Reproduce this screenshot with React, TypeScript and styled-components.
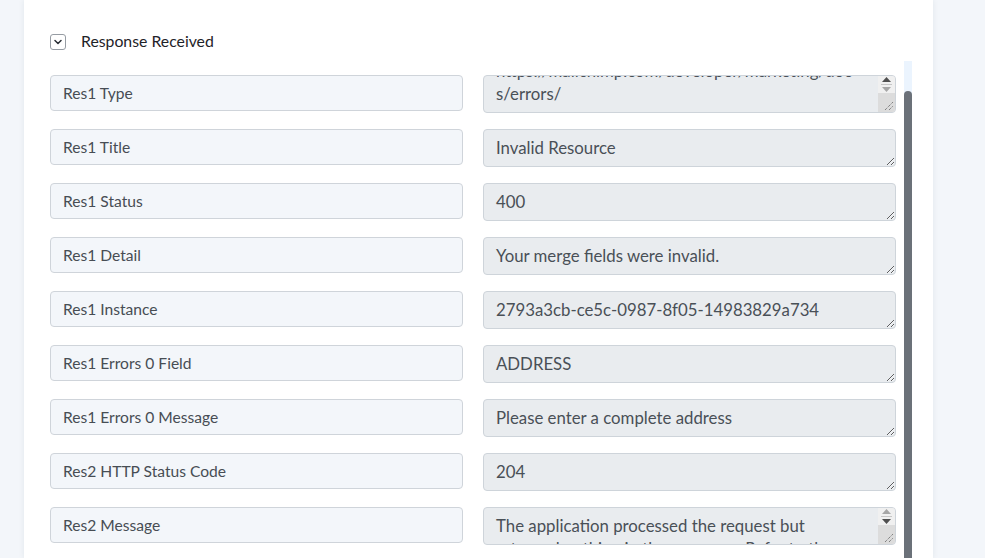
import styled, { createGlobalStyle } from "styled-components";
import { useEffect, useRef } from "react";
import * as React from "react";

const GlobalStyle = createGlobalStyle`
    * {
        box-sizing: border-box;
    }

    body {
        margin: 0;
        background: #f3f6fa;
        font-family: Lato, "Open Sans", sans-serif;
        overflow: hidden;
    }
`;

const Page = styled.div`
    height: 558px;
    overflow: hidden;
    padding-left: 24px;
`;

const Card = styled.section`
    width: 909px;
    height: 558px;
    background: #ffffff;
    box-shadow: 0 0 6px rgba(30, 45, 70, 0.08);
    padding: 34px 21px 0 26px;
    display: flex;
    flex-direction: column;
`;

const SectionHeader = styled.div`
    display: flex;
    align-items: center;
    gap: 15px;
    height: 16px;
    margin-bottom: 11px;
`;

const ToggleBox = styled.button`
    width: 16px;
    height: 16px;
    padding: 0;
    border: 1px solid #969ca3;
    border-radius: 3px;
    background: #ffffff;
    display: flex;
    align-items: center;
    justify-content: center;
    cursor: pointer;
`;

const SectionTitle = styled.span`
    font-size: 15.8px;
    line-height: 16px;
    color: #1f2328;
    margin-top: -2px;
`;

const Body = styled.div`
    flex: 1;
    display: flex;
    gap: 8px;
    overflow: hidden;
`;

const FieldList = styled.div`
    width: 846px;
    padding-top: 14px;
    display: flex;
    flex-direction: column;
    gap: 16px;
`;

const Row = styled.div`
    display: grid;
    grid-template-columns: 413px 413px;
    column-gap: 20px;
    align-items: start;
`;

const KeyField = styled.div`
    height: 36px;
    padding: 0 12px;
    display: flex;
    align-items: center;
    background: #f3f6fa;
    border: 1px solid #cfd4da;
    border-radius: 4px;
    font-size: 15.6px;
    color: #474d54;
`;

const ValueFrame = styled.div`
    display: flex;
    width: 413px;
    height: 38px;
    background: #e9ecef;
    border: 1px solid #ced4da;
    border-radius: 4px;
    overflow: hidden;
`;

const ValueArea = styled.textarea<{ $railed?: boolean }>`
    flex: 1;
    min-width: 0;
    height: 36px;
    margin: 0;
    padding: ${({ $railed }) => ($railed ? "6px 20px 7px 12px" : "6px 12px 7px")};
    background: transparent;
    border: none;
    font-family: Lato, "Open Sans", sans-serif;
    font-size: 16.8px;
    line-height: 23px;
    color: #495057;
    resize: ${({ $railed }) => ($railed ? "none" : "vertical")};
    overflow: hidden;
    outline: none;
`;

/* the little scroll column that long values show on their right */
const Rail = styled.div`
    width: 17px;
    flex-shrink: 0;
    display: flex;
    flex-direction: column;
`;

const RailButtons = styled.div`
    height: 17px;
    background: #f0f0f0;
    display: flex;
    flex-direction: column;
    align-items: center;
    justify-content: center;
    gap: 1px;
`;

const RailDivider = styled.div`
    width: 11px;
    height: 1px;
    background: #c6c6c6;
    margin: 1px 0;
`;

const RailCorner = styled.div`
    flex: 1;
    background: #dcdcdc;
    display: flex;
    align-items: flex-end;
    justify-content: flex-end;
    padding: 0 2px 2px 0;
`;

const ScrollTrack = styled.div`
    width: 8px;
    flex-shrink: 0;
    background: #ebf4fe;
    display: flex;
    flex-direction: column;
`;

const ScrollThumb = styled.div`
    flex: 1;
    margin-top: 30px;
    background: #6b7179;
    border-radius: 4px 4px 0 0;
`;

type Field = { key: string; value: string; railed?: boolean; scrollEnd?: boolean };

const fields: Field[] = [
    { key: "Res1 Type", value: "https://mailchimp.com/developer/marketing/docs/errors/", railed: true, scrollEnd: true },
    { key: "Res1 Title", value: "Invalid Resource" },
    { key: "Res1 Status", value: "400" },
    { key: "Res1 Detail", value: "Your merge fields were invalid." },
    { key: "Res1 Instance", value: "2793a3cb-ce5c-0987-8f05-14983829a734" },
    { key: "Res1 Errors 0 Field", value: "ADDRESS" },
    { key: "Res1 Errors 0 Message", value: "Please enter a complete address" },
    { key: "Res2 HTTP Status Code", value: "204" },
    {
        key: "Res2 Message",
        value: "The application processed the request but returned nothing in the response. Refer to the HTTP specification for more details.",
        railed: true,
    },
];

const Arrow: React.FC<{ up?: boolean; active?: boolean }> = ({ up, active }) => (
    <svg width="9" height="5" viewBox="0 0 9 5">
        <path d={up ? "M0 5 L4.5 0 L9 5 Z" : "M0 0 L4.5 5 L9 0 Z"} fill={active ? "#4f4f4f" : "#a6a6a6"} />
    </svg>
);

const Grip = () => (
    <svg width="9" height="9" viewBox="0 0 9 9">
        <path d="M1 9 L9 1 M5 9 L9 5" stroke="#5a5a5a" strokeWidth="1" strokeDasharray="1 1" />
    </svg>
);

const ValueBox: React.FC<{ value: string; railed?: boolean; scrollEnd?: boolean }> = ({ value, railed, scrollEnd }) => {
    const ref = useRef<HTMLTextAreaElement>(null);

    // long values open already scrolled down to their last line
    useEffect(() => {
        if (scrollEnd && ref.current) {
            ref.current.scrollTop = ref.current.scrollHeight;
        }
    }, [scrollEnd]);

    return (
        <ValueFrame>
            <ValueArea ref={ref} value={value} readOnly $railed={railed} />
            {railed && (
                <Rail>
                    <RailButtons>
                        <Arrow up active={scrollEnd} />
                        <RailDivider />
                        <Arrow active={!scrollEnd} />
                    </RailButtons>
                    <RailCorner>
                        <Grip />
                    </RailCorner>
                </Rail>
            )}
        </ValueFrame>
    );
};

const Chevron = () => (
    <svg width="8" height="6" viewBox="0 0 8 6">
        <path d="M1 1.5 L4 4.5 L7 1.5" fill="none" stroke="#2b3036" strokeWidth="1.5" strokeLinecap="round" strokeLinejoin="round" />
    </svg>
);

export default function App() {
    return (
        <>
            <GlobalStyle />
            <Page>
                <Card>
                    <SectionHeader>
                        <ToggleBox type="button">
                            <Chevron />
                        </ToggleBox>
                        <SectionTitle>Response Received</SectionTitle>
                    </SectionHeader>

                    <Body>
                        <FieldList>
                            {fields.map((f) => (
                                <Row key={f.key}>
                                    <KeyField>{f.key}</KeyField>
                                    <ValueBox value={f.value} railed={f.railed} scrollEnd={f.scrollEnd} />
                                </Row>
                            ))}
                        </FieldList>
                        <ScrollTrack>
                            <ScrollThumb />
                        </ScrollTrack>
                    </Body>
                </Card>
            </Page>
        </>
    );
}
